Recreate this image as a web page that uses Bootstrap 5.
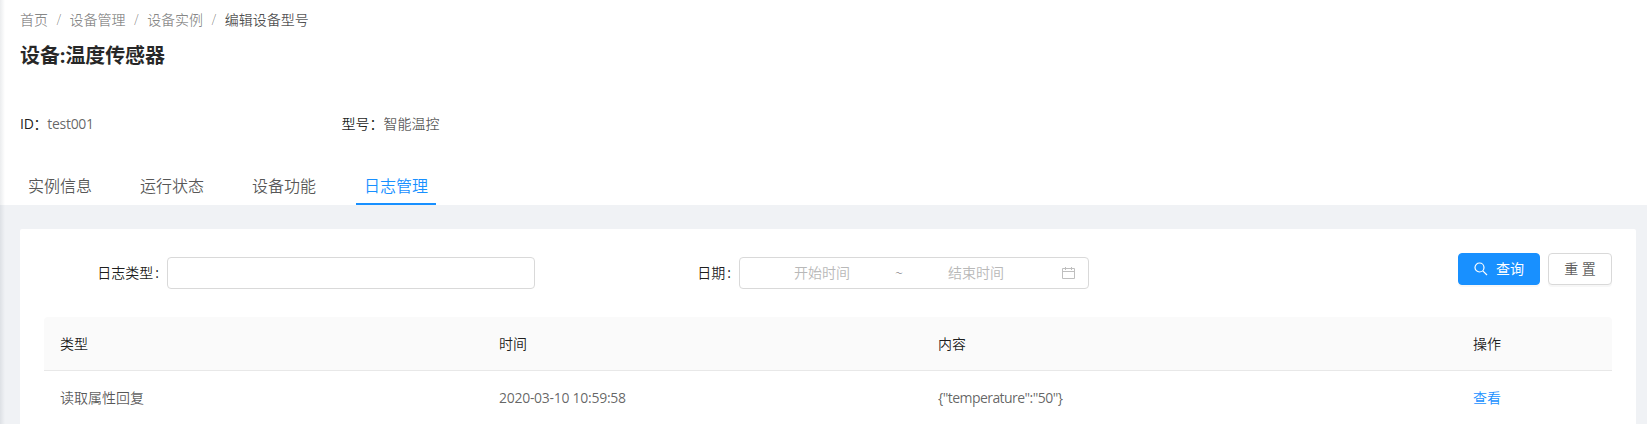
<!DOCTYPE html>
<html lang="zh-CN">
<head>
<meta charset="utf-8">
<meta name="viewport" content="width=device-width, initial-scale=1">
<title>设备:温度传感器</title>
<link href="https://cdn.jsdelivr.net/npm/bootstrap@5.3.0/dist/css/bootstrap.min.css" rel="stylesheet">
<style>
  body { font: 350 14px/22px "Open Sans", "Noto Sans CJK SC", sans-serif; color: rgba(0,0,0,.67); background: #f0f2f5; height: 424px; overflow: hidden; }
  .side-shade { position: absolute; left: 0; top: 0; width: 5px; height: 100%; background: linear-gradient(90deg, rgba(0,21,41,.08), rgba(0,21,41,0)); }
  .page-head { height: 205px; padding: 9px 20px 0; }
  .breadcrumb { --bs-breadcrumb-divider-color: rgba(0,0,0,.47); --bs-breadcrumb-item-padding-x: 8.4px; --bs-breadcrumb-margin-bottom: 0; color: rgba(0,0,0,.47); }
  .breadcrumb .active { color: rgba(0,0,0,.7); }
  .page-title { font-size: 20px; line-height: 28px; font-weight: 700; color: rgba(0,0,0,.85); margin: 11px 0 0; letter-spacing: -.1px; }
  .facts { margin-top: 43px; }
  .facts > div { width: 321.5px; }
  .ink { color: rgba(0,0,0,.9); }
  .nav-tabs { --bs-nav-tabs-border-width: 0; margin-top: 33px; gap: 32px; }
  .nav-tabs .nav-link { width: 80px; height: 37px; padding: 6px 0 0; font-size: 16px; line-height: 24px; text-align: center; color: rgba(0,0,0,.67); border: 0; border-bottom: 2px solid transparent; border-radius: 0; margin: 0; white-space: nowrap; }
  .nav-tabs .nav-link.active { color: #1890ff; border-bottom-color: #1890ff; background: none; }
  .panel { margin: 24px 11px 0 20px; padding: 24px 24px 0; border-radius: 2px 2px 0 0; height: 195px; overflow: hidden; }
  .filters { height: 64px; }
  .field-label { margin: 4px 8px 0 0; line-height: 32px; text-align: right; }
  .field-label::after { content: ":"; margin-left: 2px; font-weight: 400; }
  .box { height: 32px; margin-top: 4px; border: 1px solid #d9d9d9; border-radius: 4px; padding: 0; font-size: 14px; line-height: 30px; }
  .type-label { width: 115px; } .type-box { width: 368px; }
  .date-label { width: 196px; } .date-box { width: 350px; color: #b8b8b8; padding: 0 12px 0 10px; }
  .date-box span { text-align: center; }
  .date-part { width: 144px; }
  .date-box .tilde { width: 10px; color: rgba(0,0,0,.6); }
  .btn { height: 32px; padding: 0; font-size: 14px; line-height: 30px; border-radius: 4px; box-shadow: 0 2px 0 rgba(0,0,0,.03); }
  .btn-query { --bs-btn-color: #fff; --bs-btn-bg: #1890ff; --bs-btn-border-color: #1890ff; width: 82px; }
  .btn-reset { --bs-btn-color: rgba(0,0,0,.65); --bs-btn-bg: #fff; --bs-btn-border-color: #d9d9d9; width: 64px; }
  .log-table { table-layout: fixed; border-collapse: separate; border-spacing: 0; --bs-table-bg: transparent; margin: 0; color: inherit; }
  .log-table th { background: #fafafa; font-weight: 350; color: rgba(0,0,0,.9); }
  .log-table th:first-child { border-top-left-radius: 4px; } .log-table th:last-child { border-top-right-radius: 4px; }
  .log-table th, .log-table td { height: 54px; padding: 0 16px; vertical-align: middle; border-bottom: 1px solid #e8e8e8; }
  .log-table a { color: #1890ff; text-decoration: none; }
  .latin { font-weight: 400; letter-spacing: -.28px; color: rgba(0,0,0,.62) !important; }
  .log-table .payload { letter-spacing: -.55px; }
</style>
</head>
<body>
<header class="page-head bg-white">
  <nav><ol class="breadcrumb">
    <li class="breadcrumb-item">首页</li><li class="breadcrumb-item">设备管理</li><li class="breadcrumb-item">设备实例</li><li class="breadcrumb-item active">编辑设备型号</li>
  </ol></nav>
  <h1 class="page-title">设备:温度传感器</h1>
  <div class="facts d-flex">
    <div class="latin"><span class="ink">ID：</span>test001</div>
    <div><span class="ink">型号：</span>智能温控</div>
  </div>
  <ul class="nav nav-tabs">
    <li class="nav-item"><a class="nav-link">实例信息</a></li>
    <li class="nav-item"><a class="nav-link">运行状态</a></li>
    <li class="nav-item"><a class="nav-link">设备功能</a></li>
    <li class="nav-item"><a class="nav-link active">日志管理</a></li>
  </ul>
</header>
<main class="panel bg-white">
  <form class="filters d-flex">
    <label class="field-label type-label ink" for="logType">日志类型</label>
    <input id="logType" class="form-control box type-box" type="text">
    <label class="field-label date-label ink">日期</label>
    <div class="box date-box d-flex align-items-center">
      <span class="date-part">开始时间</span><span class="tilde">~</span><span class="date-part">结束时间</span>
      <svg class="ms-auto" width="14" height="14" viewBox="0 0 14 14" fill="none" stroke="#bfbfbf"><path d="M.5 2.5h12v10H.5zM.5 5.5h12M3.500 1v3M9.500 1v3"/></svg>
    </div>
    <div class="d-flex gap-2 ms-auto">
      <button type="button" class="btn btn-query d-flex align-items-center justify-content-center gap-2"><svg width="14" height="14" viewBox="0 0 14 14" fill="none" stroke="#fff" stroke-width="1.2"><circle cx="5.5" cy="5.5" r="4.5"/><path d="m8.8 8.800 4.200 4.200"/></svg>查询</button>
      <button type="button" class="btn btn-reset">重 置</button>
    </div>
  </form>
  <table class="table log-table">
    <colgroup><col width="439"><col width="439"><col width="535"><col></colgroup>
    <thead><tr><th>类型</th><th>时间</th><th>内容</th><th>操作</th></tr></thead>
    <tbody><tr><td>读取属性回复</td><td class="latin">2020-03-10 10:59:58</td><td class="latin payload">{"temperature":"50"}</td><td><a href="#">查看</a></td></tr></tbody>
  </table>
</main>
<div class="side-shade"></div>
</body>
</html>
